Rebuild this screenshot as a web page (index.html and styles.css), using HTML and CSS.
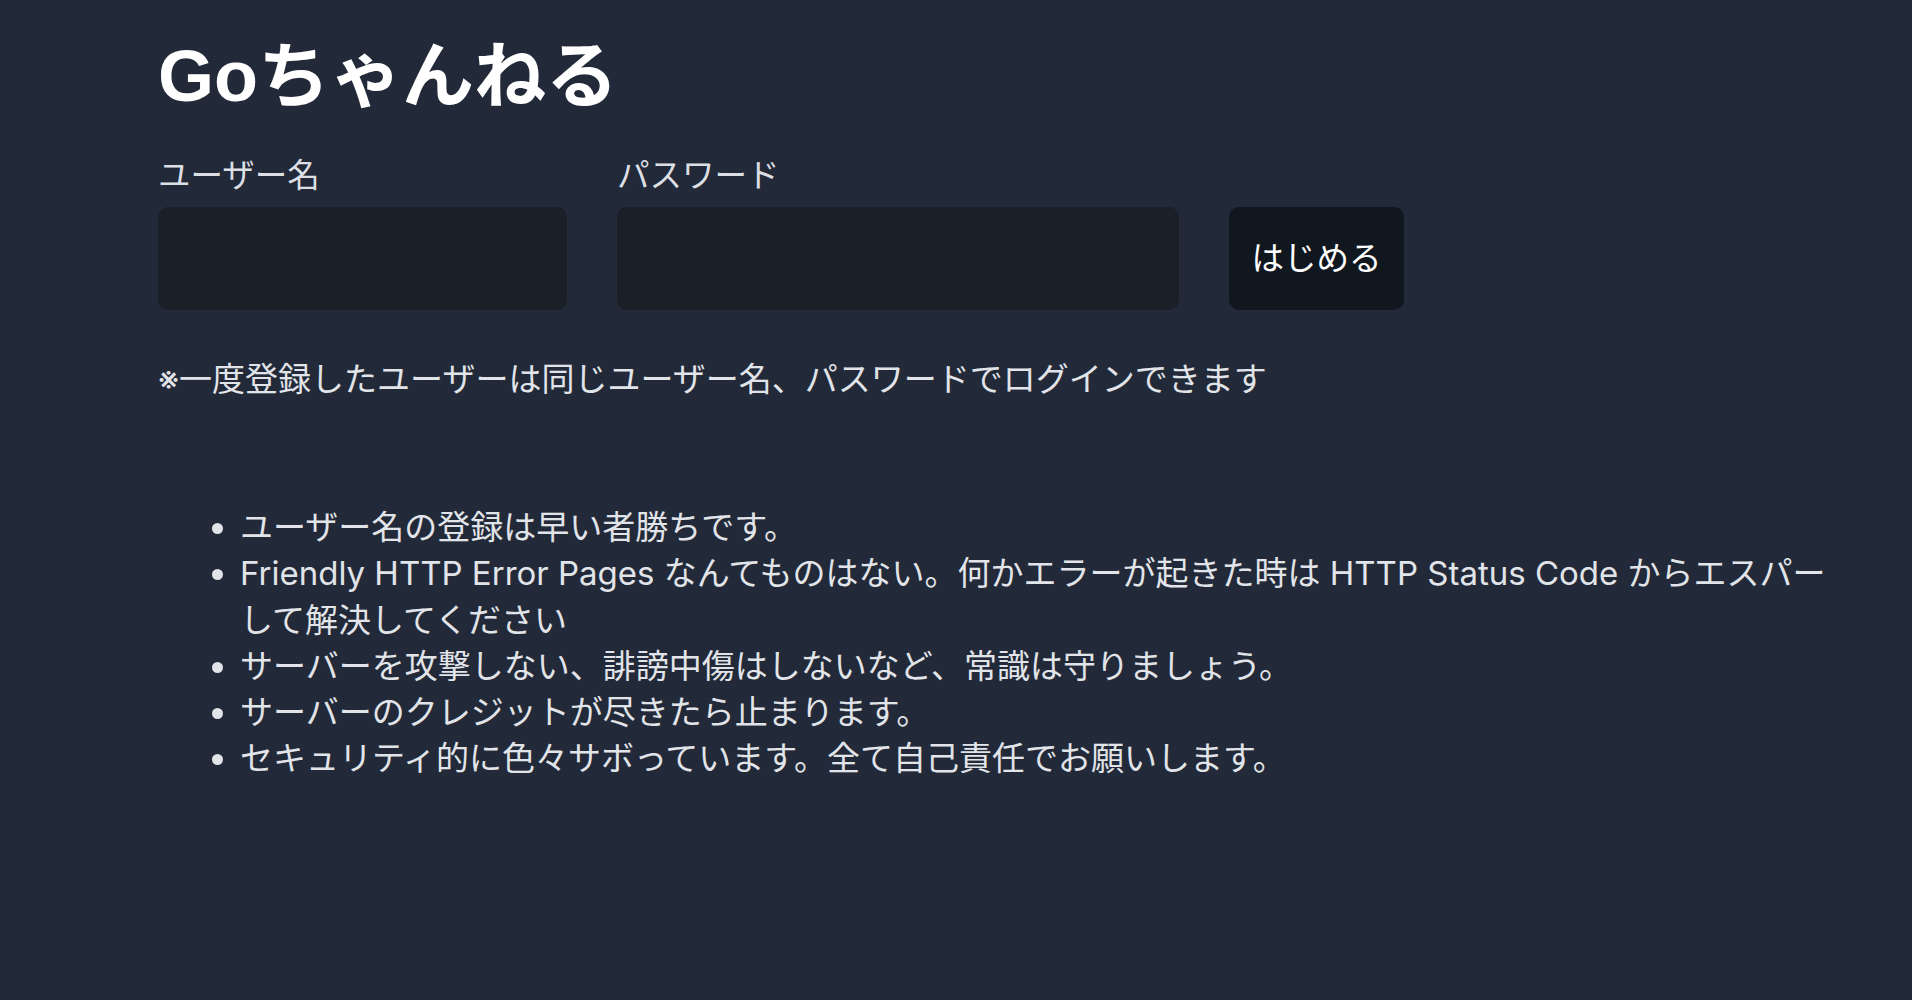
FILE: index.html
```html
<!DOCTYPE html>
<html lang="ja">
<head>
<meta charset="utf-8">
<title>Goちゃんねる</title>
<link rel="stylesheet" href="styles.css">
</head>
<body>
<main class="container">
  <h1 class="title">Goちゃんねる</h1>
  <form class="login">
    <label class="field field-user">
      <span class="field-label">ユーザー名</span>
      <input class="field-input" type="text" name="username">
    </label>
    <label class="field field-pass">
      <span class="field-label">パスワード</span>
      <input class="field-input" type="password" name="password">
    </label>
    <button class="start" type="submit">はじめる</button>
  </form>
  <p class="note">※一度登録したユーザーは同じユーザー名、パスワードでログインできます</p>
  <ul class="rules">
    <li>ユーザー名の登録は早い者勝ちです。</li>
    <li>Friendly HTTP Error Pages なんてものはない。何かエラーが起きた時は HTTP Status Code からエスパーして解決してください</li>
    <li>サーバーを攻撃しない、誹謗中傷はしないなど、常識は守りましょう。</li>
    <li>サーバーのクレジットが尽きたら止まります。</li>
    <li>セキュリティ的に色々サボっています。全て自己責任でお願いします。</li>
  </ul>
</main>
</body>
</html>
```

FILE: styles.css
```css
html, body {
  margin: 0;
  padding: 0;
  background: #222938;
}

body {
  font-family: "Inter", "Noto Sans CJK JP", sans-serif;
  color: #e1e4e8;
  min-height: 1000px;
}

.container {
  width: 1688px;
  padding: 33px 0 0 158px;
  box-sizing: content-box;
}

.title {
  margin: 0;
  font-size: 72px;
  line-height: 86px;
  font-weight: 700;
  color: #ffffff;
  font-family: "Liberation Sans", "Noto Sans CJK JP", sans-serif;
}

.login {
  display: flex;
  align-items: flex-end;
  gap: 50px;
  margin-top: 34px;
}

.field {
  display: flex;
  flex-direction: column;
  gap: 8px;
}

.field-user { width: 409px; }
.field-pass { width: 562px; }

.field-label {
  font-size: 32.5px;
  line-height: 46px;
  color: #dcdfe3;
}

.field-input {
  height: 103px;
  border: none;
  border-radius: 10px;
  background: #1a1f28;
  padding: 0 20px;
  font-size: 32px;
  color: #fff;
  box-sizing: border-box;
  outline: none;
}

.start {
  width: 175px;
  height: 103px;
  border: none;
  border-radius: 10px;
  background: #11171f;
  color: #ffffff;
  font-family: "Inter", "Noto Sans CJK JP", sans-serif;
  font-size: 32.5px;
  line-height: 46px;
  padding: 0;
}

.note {
  margin: 46px 0 0;
  font-size: 33px;
  line-height: 46px;
}

.rules {
  margin: 102px 0 0;
  padding-left: 82px;
  font-size: 33px;
  line-height: 46.3px;
}

.rules li {
  margin: 0;
}
```
